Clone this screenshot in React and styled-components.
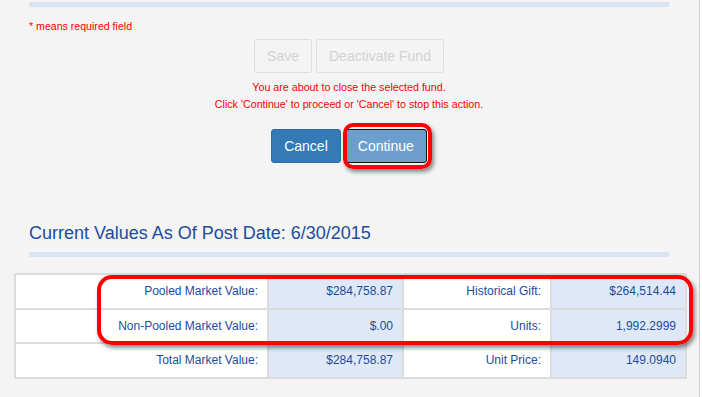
import React from 'react';
import styled, { createGlobalStyle } from 'styled-components';

const GlobalStyle = createGlobalStyle`
  body {
    margin: 0;
    background: #ffffff;
    font-family: "Liberation Sans", Arial, sans-serif;
  }
`

const Page = styled.div`
  width: 700px;
  min-height: 397px;
  box-sizing: border-box;
  background: #f4f4f4;
  border-right: 1px solid #cfcfcf;
  padding-top: 2px;
`
const Section = styled.div`
  padding: 0 30px 0 29px;
`
const Bar = styled.div`
  height: 5px;
  background: #d9e4f4;
  margin-top: ${p => p.$top || 0}px;
`
const Required = styled.div`
  margin-top: 12px;
  font-size: 10.6px;
  line-height: 14px;
  color: #ff0000;
`
const ButtonRow = styled.div`
  display: flex;
  justify-content: center;
  gap: 4px;
  margin-top: ${p => p.$top}px;
`
const Button = styled.button`
  font-family: "Liberation Sans", Arial, sans-serif;
  font-size: 14px;
  line-height: 20px;
  padding: 6px 12px;
  border-radius: 3px;
  border: 1px solid transparent;
  cursor: pointer;
`
const GhostButton = styled(Button)`
  background: #f4f4f4;
  border-color: #dedede;
  color: #d2d2d2;
`
const BlueButton = styled(Button)`
  background: ${p => (p.$active ? '#6c9fcd' : '#337ab7')};
  border-color: ${p => (p.$active ? '#111111' : '#2e6da4')};
  color: #ffffff;
`
const Message = styled.div`
  margin-top: 6px;
  text-align: center;
  font-size: 10.7px;
  line-height: 17px;
  color: #ff0000;
`
const Highlight = styled.span`
  position: relative;
  display: inline-flex;
  &::after {
    content: '';
    position: absolute;
    top: ${p => p.$top}px;
    left: ${p => p.$left}px;
    right: ${p => p.$right}px;
    bottom: ${p => p.$bottom}px;
    border: 4px solid #ff0000;
    border-radius: ${p => p.$radius}px;
    box-shadow: 2px 3px 4px rgba(0, 0, 0, 0.45);
    pointer-events: none;
  }
`
const Heading = styled.h2`
  margin: 59px 0 0;
  font-size: 18px;
  line-height: 22px;
  font-weight: normal;
  color: #1c4c9c;
`
const TableWrap = styled.div`
  position: relative;
  margin: 16px 0 0 14px;
  width: 671px;
`
const Table = styled.table`
  width: 671px;
  border-collapse: collapse;
  table-layout: fixed;
  border: 2px solid #dcdcdc;
`
const Col = styled.col`
  width: ${p => p.$w}px;
`
const Cell = styled.td`
  height: 32.5px;
  padding: 0 9px 0 4px;
  border: 2px solid #dcdcdc;
  text-align: right;
  font-size: 12px;
  color: #1c4c9c;
  background: ${p => (p.$value ? '#dfe8f6' : '#ffffff')};
  white-space: nowrap;
`
const TableMark = styled.div`
  position: absolute;
  left: 83px;
  top: 2px;
  width: 596px;
  height: 70px;
  box-sizing: border-box;
  border: 4px solid #ff0000;
  border-radius: 15px;
  box-shadow: 2px 3px 4px rgba(0, 0, 0, 0.45);
  pointer-events: none;
`

const rows = [
  ['Pooled Market Value:', '$284,758.87', 'Historical Gift:', '$264,514.44'],
  ['Non-Pooled Market Value:', '$.00', 'Units:', '1,992.2999'],
  ['Total Market Value:', '$284,758.87', 'Unit Price:', '149.0940'],
]
const widths = [253, 135, 148, 135]

const App = _ => {
  return (
    <Page>
      <GlobalStyle />
      <Section>
        <Bar />
        <Required>* means required field</Required>
        <ButtonRow $top={6}>
          <GhostButton>Save</GhostButton>
          <GhostButton>Deactivate Fund</GhostButton>
        </ButtonRow>
        <Message>
          You are about to close the selected fund.<br />
          Click 'Continue' to proceed or 'Cancel' to stop this action.
        </Message>
        <ButtonRow $top={16}>
          <BlueButton>Cancel</BlueButton>
          <Highlight $top={-6} $left={-2} $right={-5} $bottom={-6} $radius={10}>
            <BlueButton $active>Continue</BlueButton>
          </Highlight>
        </ButtonRow>
        <Heading>Current Values As Of Post Date: 6/30/2015</Heading>
        <Bar $top={8} />
      </Section>
      <TableWrap>
        <Table>
          <colgroup>
            {widths.map((w, i) => <Col key={i} $w={w} />)}
          </colgroup>
          <tbody>
            {rows.map((r, i) => (
              <tr key={i}>
                {r.map((c, j) => (
                  <Cell key={j} $value={j % 2 === 1}>{c}</Cell>
                ))}
              </tr>
            ))}
          </tbody>
        </Table>
        <TableMark />
      </TableWrap>
    </Page>
  );
};

export default App;
